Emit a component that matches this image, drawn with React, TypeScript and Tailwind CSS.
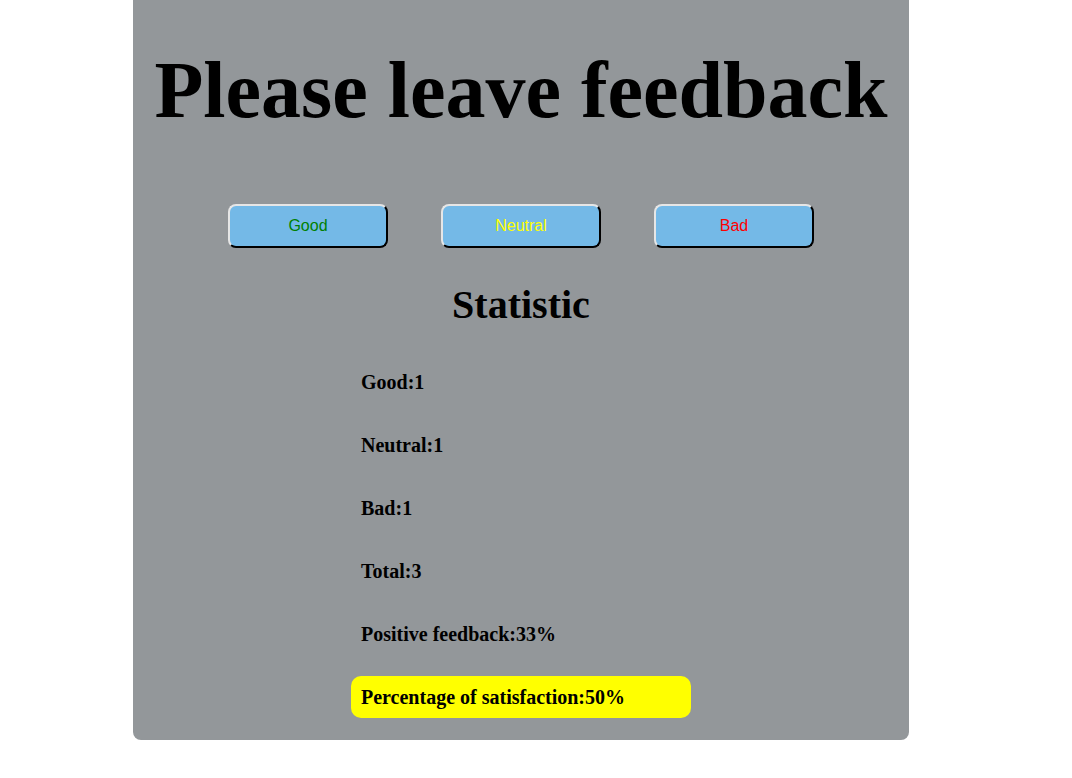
import React from "react";

const serif = { fontFamily: '"Liberation Serif", "Times New Roman", serif' };

export default function App() {
  const stats = [
    ["Good", "1"],
    ["Neutral", "1"],
    ["Bad", "1"],
    ["Total", "3"],
    ["Positive feedback", "33%"],
  ];
  return (
    <div className="min-h-[778px] bg-white" style={serif}>
      <div className="ml-[133px] w-[776px] h-[740px] bg-[#93979a] rounded-b-[8px] flex flex-col items-center">
        <h1 className="mt-[44px] text-[80px] leading-[92px] font-bold text-black">Please leave feedback</h1>
        <div className="mt-[68px] flex gap-[53px]">
          {[
            ["Good", "text-[#008000]"],
            ["Neutral", "text-[#ffff00]"],
            ["Bad", "text-[#ff0000]"],
          ].map(([l, c]) => (
            <button
              key={l}
              className={`w-[160px] h-[44px] bg-[#74b9e7] rounded-[8px] border-2 border-t-[#e6e6e6] border-l-[#e6e6e6] border-r-black border-b-black text-[16px] ${c}`}
              style={{ fontFamily: '"Liberation Sans", Arial, sans-serif' }}
            >
              {l}
            </button>
          ))}
        </div>
        <h2 className="mt-[34px] text-[40px] leading-[46px] font-bold text-black">Statistic</h2>
        <ul className="mt-[33px] w-[340px] flex flex-col gap-[21px]">
          {stats.map(([k, v]) => (
            <li key={k} className="h-[42px] px-[10px] flex items-center text-[20px] font-bold text-black">
              {k}:{v}
            </li>
          ))}
          <li className="h-[42px] px-[10px] flex items-center text-[20px] font-bold text-black bg-[#ffff00] rounded-[10px]">
            Percentage of satisfaction:50%
          </li>
        </ul>
      </div>
    </div>
  );
}
